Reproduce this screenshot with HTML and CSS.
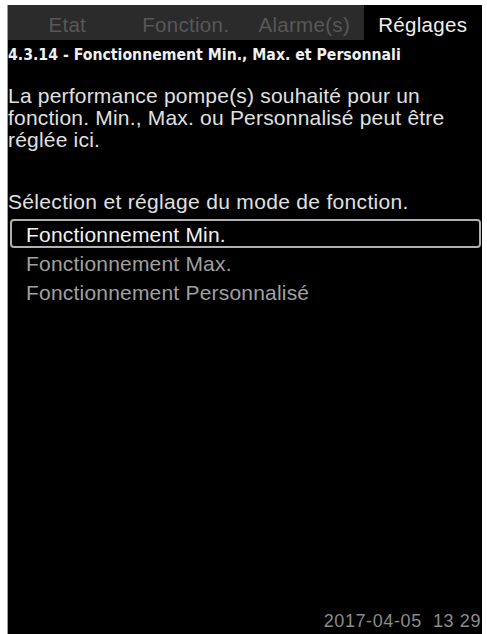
FILE: index.html
```html
<!DOCTYPE html>
<html lang="fr">
<head>
<meta charset="utf-8">
<link rel="stylesheet" href="styles.css">
</head>
<body>
<div class="screen">
  <div class="tabs">
    <div class="tab">Etat</div>
    <div class="tab">Fonction.</div>
    <div class="tab">Alarme(s)</div>
    <div class="tab active">Réglages</div>
  </div>
  <div class="title">4.3.14 - Fonctionnement Min., Max. et Personnali</div>
  <div class="content">
    <p class="desc">La performance pompe(s) souhaité pour un fonction. Min., Max. ou Personnalisé peut être réglée ici.</p>
    <p class="label">Sélection et réglage du mode de fonction.</p>
    <ul class="options">
      <li class="option selected">Fonctionnement Min.</li>
      <li class="option">Fonctionnement Max.</li>
      <li class="option">Fonctionnement Personnalisé</li>
    </ul>
  </div>
  <div class="footer">2017-04-05&nbsp; 13 29</div>
</div>
</body>
</html>
```

FILE: styles.css
```css
html, body {
  margin: 0;
  padding: 0;
  background: #ffffff;
}
body {
  width: 487px;
  height: 634px;
  overflow: hidden;
  font-family: "Liberation Sans", Arial, sans-serif;
}
.screen {
  margin: 5px 0 0 7px;
  width: 475px;
  height: 629px;
  background: #000;
  color: #e0e0e0;
  display: flex;
  flex-direction: column;
  border-left: 1px solid #9a9a9a;
  box-sizing: border-box;
}
.tabs {
  display: grid;
  grid-template-columns: repeat(4, 1fr);
  height: 35px;
  background: #2b2b2b;
}
.tab {
  display: flex;
  align-items: center;
  justify-content: center;
  font-size: 20.5px;
  letter-spacing: 0.3px;
  color: #585858;
  padding-top: 4px;
}
.tab.active {
  background: #000;
  color: #eeeeee;
}
.title {
  font-family: "DejaVu Sans Condensed", "DejaVu Sans", sans-serif;
  font-stretch: condensed;
  font-weight: bold;
  font-size: 15.7px;
  line-height: 20px;
  color: #f0f0f0;
  padding: 5px 0 0 0;
  white-space: nowrap;
}
.content {
  flex: 1;
}
.desc {
  margin: 20px 0 0 0;
  font-size: 21px;
  line-height: 22px;
  letter-spacing: 0.2px;
  width: 450px;
  color: #e0e0e0;
}
.label {
  margin: 40px 0 0 0;
  font-size: 21px;
  line-height: 22px;
  letter-spacing: 0.32px;
  color: #e0e0e0;
}
.options {
  list-style: none;
  margin: 6px 1px 0 2px;
  padding: 0;
}
.option {
  font-size: 21px;
  height: 29px;
  line-height: 22px;
  letter-spacing: 0.2px;
  padding: 3px 0 0 14px;
  color: #a0a0a0;
  box-sizing: border-box;
  border: 2px solid transparent;
  border-radius: 4px;
}
.option.selected {
  color: #f2f2f2;
  border-color: #b0b0b0;
}
.footer {
  text-align: right;
  font-size: 18px;
  line-height: 20px;
  letter-spacing: 0.6px;
  color: #8c8c8c;
  padding: 0 1px 3px 0;
}
```
